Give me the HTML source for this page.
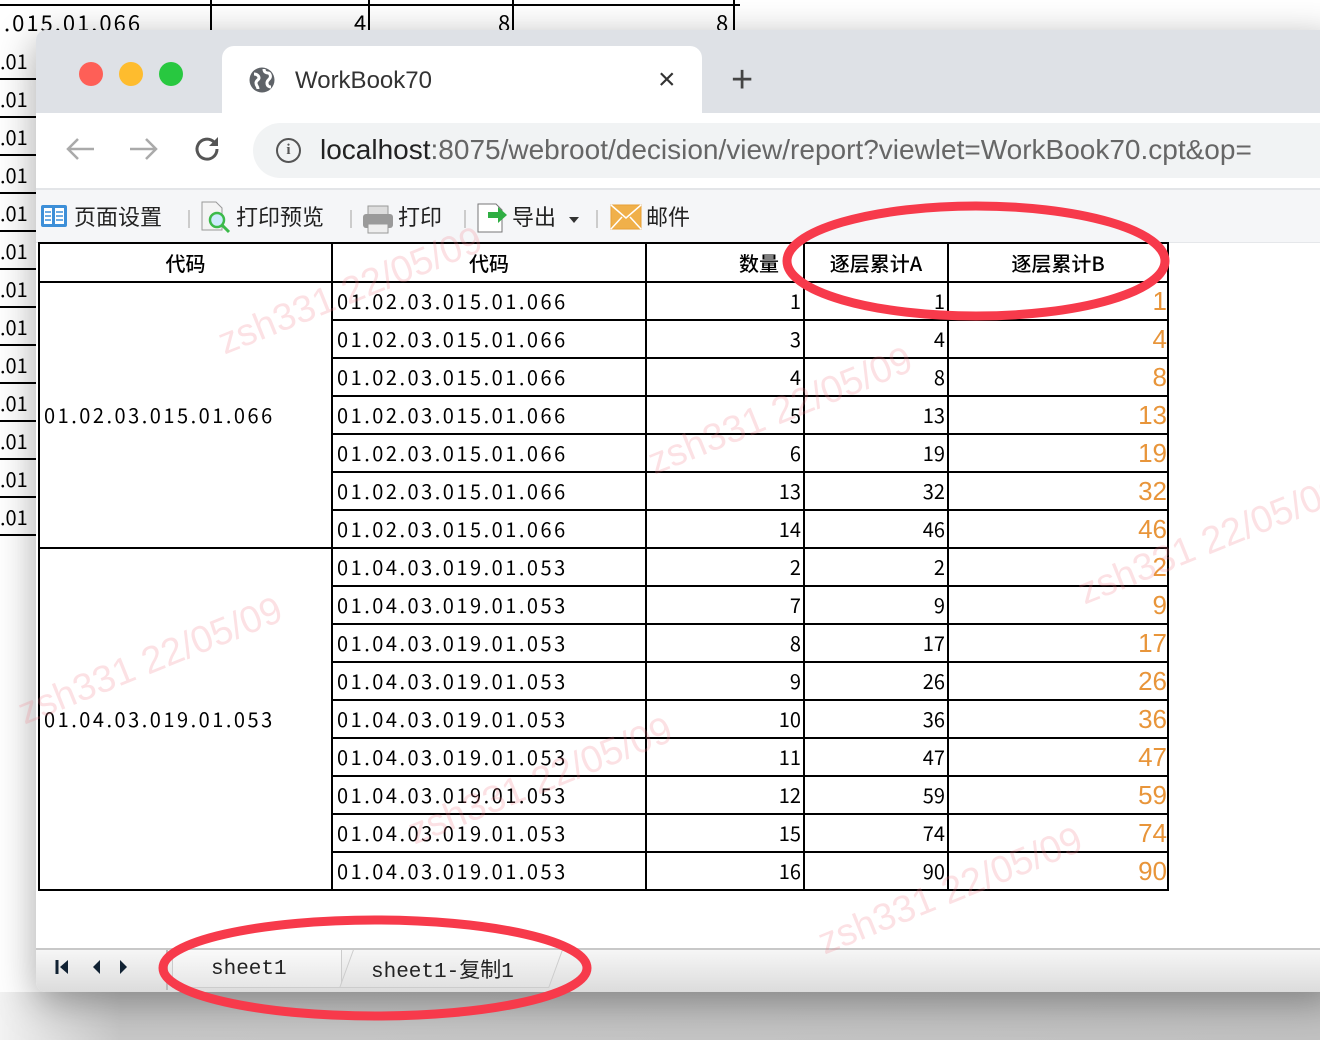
<!DOCTYPE html>
<html><head><meta charset="utf-8"><style>
*{margin:0;padding:0;box-sizing:border-box}
body{width:1320px;height:1040px;overflow:hidden;position:relative;background:#fff;font-family:"Liberation Sans","Noto Sans CJK SC",sans-serif}
.abs{position:absolute}
.bgrow{position:absolute;left:0;width:36px;height:38px;border-bottom:2px solid #000;font:20px "Noto Sans CJK SC",sans-serif;color:#000;overflow:hidden;white-space:nowrap}
.win{position:absolute;left:36px;top:30px;width:1300px;height:962px;background:#fff;border-radius:10px 0 0 10px;box-shadow:0 10px 40px rgba(0,0,0,.35);overflow:hidden}
.tabbar{position:absolute;left:0;top:0;width:100%;height:83px;background:#dee1e6}
.tab{position:absolute;left:186px;top:16px;width:480px;height:67px;background:#fff;border-radius:12px 12px 0 0}
table{position:absolute;left:2px;top:212px;border-collapse:collapse;font:20px "Noto Sans CJK SC",sans-serif;color:#000}
td{border:2px solid #000;height:38px;padding:0 2px;white-space:nowrap;line-height:32px}
td.c{letter-spacing:2.5px;padding-left:4px}
td.n{text-align:right}
td.o{text-align:right;color:#e8953a;font:26px "Liberation Sans",sans-serif;line-height:34px;padding-right:0}
th{border:2px solid #000;height:39px;font-weight:500;font-size:20px;line-height:34px}
.tb{position:absolute;top:158px;left:0;width:100%;height:55px;background:#f5f6f8;border-top:2px solid #e3e5e8;border-bottom:1px solid #e5e7ea;font:22px "Noto Sans CJK SC",sans-serif;color:#222}
.tb span{position:absolute;top:10px}
.sep{position:absolute;top:20px;width:2px;height:18px;background:#ccc}
.wm{position:absolute;color:rgba(240,120,130,.22);font:38px "Liberation Sans",sans-serif;transform:rotate(-22deg);white-space:nowrap}
</style></head><body>
<div class="abs" style="left:0;top:0;width:740px;height:6px;border-bottom:2px solid #000"></div>
<div class="abs" style="left:210px;top:0;width:2px;height:32px;background:#000"></div>
<div class="abs" style="left:368px;top:0;width:2px;height:32px;background:#000"></div>
<div class="abs" style="left:512px;top:0;width:2px;height:32px;background:#000"></div>
<div class="abs" style="left:733px;top:0;width:2px;height:32px;background:#000"></div>
<div class="abs" style="left:4px;top:6px;font:22px 'Noto Sans CJK SC',sans-serif;letter-spacing:2px">.015.01.066</div>
<div class="abs" style="left:354px;top:6px;font:22px 'Noto Sans CJK SC',sans-serif">4</div>
<div class="abs" style="left:498px;top:6px;font:22px 'Noto Sans CJK SC',sans-serif">8</div>
<div class="abs" style="left:716px;top:6px;font:22px 'Noto Sans CJK SC',sans-serif">8</div>
<div class="bgrow" style="top:42px;line-height:38px">.01</div>
<div class="bgrow" style="top:80px;line-height:38px">.01</div>
<div class="bgrow" style="top:118px;line-height:38px">.01</div>
<div class="bgrow" style="top:156px;line-height:38px">.01</div>
<div class="bgrow" style="top:194px;line-height:38px">.01</div>
<div class="bgrow" style="top:232px;line-height:38px">.01</div>
<div class="bgrow" style="top:270px;line-height:38px">.01</div>
<div class="bgrow" style="top:308px;line-height:38px">.01</div>
<div class="bgrow" style="top:346px;line-height:38px">.01</div>
<div class="bgrow" style="top:384px;line-height:38px">.01</div>
<div class="bgrow" style="top:422px;line-height:38px">.01</div>
<div class="bgrow" style="top:460px;line-height:38px">.01</div>
<div class="bgrow" style="top:498px;line-height:38px">.01</div>
<div class="abs" style="left:0;top:992px;width:1320px;height:48px;background:linear-gradient(90deg,#f2f2f2 0,#c8c8c8 120px,#c2c2c2 100%)"></div>

<div class="win">
<div class="tabbar"></div>
<div class="abs" style="left:43px;top:32px;width:24px;height:24px;border-radius:50%;background:#fe5f57"></div>
<div class="abs" style="left:83px;top:32px;width:24px;height:24px;border-radius:50%;background:#febc2e"></div>
<div class="abs" style="left:123px;top:32px;width:24px;height:24px;border-radius:50%;background:#28c840"></div>
<div class="tab"></div>
<svg class="abs" style="left:212px;top:36px" width="28" height="28" viewBox="0 0 28 28"><circle cx="14" cy="14" r="12.5" fill="#5f6368"/><path d="M6 8c3 0 5 2 5 4s-3 2-3 5 2 3 2 6M16 3c0 3 2 4 4 4s3 3 2 5-3 2-3 5 2 4 4 4" stroke="#fff" stroke-width="3" fill="none"/></svg>
<div class="abs" style="left:259px;top:37px;font:24px 'Liberation Sans',sans-serif;color:#333">WorkBook70</div>
<div class="abs" style="left:622px;top:33px;font:30px 'Liberation Sans',sans-serif;color:#333">×</div>
<div class="abs" style="left:695px;top:29px;font:38px 'Liberation Sans',sans-serif;color:#444">+</div>
<div class="abs" style="left:0;top:83px;width:100%;height:75px;background:#fff"></div>
<svg class="abs" style="left:28px;top:106px" width="32" height="26"><path d="M30 13H4M14 3L4 13l10 10" stroke="#aaa" stroke-width="2.5" fill="none"/></svg>
<svg class="abs" style="left:92px;top:106px" width="32" height="26"><path d="M2 13h26M18 3l10 10-10 10" stroke="#aaa" stroke-width="2.5" fill="none"/></svg>
<svg class="abs" style="left:157px;top:104px" width="30" height="30"><path d="M24 15a10 10 0 1 1-3-7" stroke="#555" stroke-width="3" fill="none"/><path d="M25 3v9h-9z" fill="#555"/></svg>
<div class="abs" style="left:217px;top:93px;width:1100px;height:55px;background:#f1f3f4;border-radius:28px"></div>
<div class="abs" style="left:240px;top:108px;width:25px;height:25px;border:2.5px solid #555;border-radius:50%;font:bold 15px 'Liberation Serif',serif;color:#555;text-align:center;line-height:20px">i</div>
<div class="abs" style="left:284px;top:104px;font:28px 'Liberation Sans',sans-serif;color:#666;white-space:nowrap"><span style="color:#222">localhost</span>:8075/webroot/decision/view/report?viewlet=WorkBook70.cpt&amp;op=</div>
<div class="tb">
<svg class="abs" style="left:4px;top:14px" width="28" height="24"><rect x="1" y="1" width="26" height="22" fill="#3d8fd8" rx="2"/><rect x="4" y="4" width="8" height="16" fill="#fff"/><rect x="15" y="4" width="9" height="16" fill="#fff"/><path d="M5 8h6M5 12h6M5 16h6M16 8h7M16 12h7M16 16h7" stroke="#3d8fd8" stroke-width="1.5"/></svg>
<span style="left:38px">页面设置</span><div class="sep" style="left:152px"></div>
<svg class="abs" style="left:164px;top:10px" width="34" height="34"><path d="M2 2h14l6 6v22H2z" fill="#f4f4f4" stroke="#999"/><circle cx="17" cy="20" r="7" fill="#cdeafc" stroke="#3cba4a" stroke-width="2.5"/><path d="M22 25l7 7" stroke="#3cba4a" stroke-width="3"/></svg>
<span style="left:200px">打印预览</span><div class="sep" style="left:314px"></div>
<svg class="abs" style="left:326px;top:14px" width="32" height="30"><rect x="6" y="2" width="20" height="10" fill="#ddd" stroke="#999"/><rect x="1" y="10" width="30" height="14" rx="3" fill="#9a9a9a"/><rect x="6" y="20" width="20" height="9" fill="#eee" stroke="#999"/></svg>
<span style="left:362px">打印</span><div class="sep" style="left:428px"></div>
<svg class="abs" style="left:440px;top:10px" width="34" height="34"><path d="M2 4h18l6 6v22H2z" fill="#fff" stroke="#777"/><path d="M12 12h10v-5l9 8-9 8v-5H12z" fill="#2fae43"/></svg>
<span style="left:476px">导出</span><div class="abs" style="left:533px;top:27px;border:5px solid transparent;border-top:6px solid #333"></div><div class="sep" style="left:560px"></div>
<svg class="abs" style="left:574px;top:14px" width="32" height="26"><rect x="1" y="1" width="30" height="24" fill="#f0b04a" stroke="#e8a036"/><path d="M1 1l15 13L31 1M1 25l11-12M31 25L20 13" stroke="#fff" stroke-width="1.5" fill="none"/></svg>
<span style="left:610px">邮件</span>
</div>

<table>
<colgroup><col style="width:293px"><col style="width:314px"><col style="width:158px"><col style="width:144px"><col style="width:220px"></colgroup>
<tr><th>代码</th><th>代码</th><th style="text-align:right;padding-right:24px">数量</th><th>逐层累计A</th><th>逐层累计B</th></tr>
<tr><td class="c" rowspan="7">01.02.03.015.01.066</td><td class="c">01.02.03.015.01.066</td><td class="n">1</td><td class="n">1</td><td class="o">1</td></tr>
<tr><td class="c">01.02.03.015.01.066</td><td class="n">3</td><td class="n">4</td><td class="o">4</td></tr>
<tr><td class="c">01.02.03.015.01.066</td><td class="n">4</td><td class="n">8</td><td class="o">8</td></tr>
<tr><td class="c">01.02.03.015.01.066</td><td class="n">5</td><td class="n">13</td><td class="o">13</td></tr>
<tr><td class="c">01.02.03.015.01.066</td><td class="n">6</td><td class="n">19</td><td class="o">19</td></tr>
<tr><td class="c">01.02.03.015.01.066</td><td class="n">13</td><td class="n">32</td><td class="o">32</td></tr>
<tr><td class="c">01.02.03.015.01.066</td><td class="n">14</td><td class="n">46</td><td class="o">46</td></tr>
<tr><td class="c" rowspan="9">01.04.03.019.01.053</td><td class="c">01.04.03.019.01.053</td><td class="n">2</td><td class="n">2</td><td class="o">2</td></tr>
<tr><td class="c">01.04.03.019.01.053</td><td class="n">7</td><td class="n">9</td><td class="o">9</td></tr>
<tr><td class="c">01.04.03.019.01.053</td><td class="n">8</td><td class="n">17</td><td class="o">17</td></tr>
<tr><td class="c">01.04.03.019.01.053</td><td class="n">9</td><td class="n">26</td><td class="o">26</td></tr>
<tr><td class="c">01.04.03.019.01.053</td><td class="n">10</td><td class="n">36</td><td class="o">36</td></tr>
<tr><td class="c">01.04.03.019.01.053</td><td class="n">11</td><td class="n">47</td><td class="o">47</td></tr>
<tr><td class="c">01.04.03.019.01.053</td><td class="n">12</td><td class="n">59</td><td class="o">59</td></tr>
<tr><td class="c">01.04.03.019.01.053</td><td class="n">15</td><td class="n">74</td><td class="o">74</td></tr>
<tr><td class="c">01.04.03.019.01.053</td><td class="n">16</td><td class="n">90</td><td class="o">90</td></tr>
</table>

<div class="abs" style="left:0;top:918px;width:100%;height:44px;background:linear-gradient(#f6f6f6,#dcdcdc);border-top:2px solid #c8c8c8"></div>
<svg class="abs" style="left:18px;top:928px" width="80" height="18"><path d="M3 2v14" stroke="#123" stroke-width="3"/><path d="M14 2L6 9l8 7z" fill="#123"/><path d="M46 2l-7 7 7 7z" fill="#123"/><path d="M66 2l7 7-7 7z" fill="#123"/></svg>
<div class="abs" style="left:130px;top:920px;width:2px;height:40px;background:#bbb"></div>
<div class="abs" style="left:136px;top:920px;width:170px;height:38px;background:linear-gradient(#fafafa,#e6e6e6);border:1px solid #ccc;border-top:none;font:21px 'Liberation Mono',monospace;color:#222;padding:8px 0 0 38px">sheet1</div>
<div class="abs" style="left:310px;top:920px;width:210px;height:38px;background:linear-gradient(#f6f6f6,#e2e2e2);border:1px solid #ccc;border-top:none;font:21px 'Liberation Mono','Noto Sans CJK SC',monospace;color:#222;padding:4px 0 0 24px;transform:skewX(-20deg)"><div style="transform:skewX(20deg)">sheet1-复制1</div></div>
</div>

<div class="wm" style="left:210px;top:270px">zsh331 22/05/09</div>
<div class="wm" style="left:640px;top:390px">zsh331 22/05/09</div>
<div class="wm" style="left:10px;top:640px">zsh331 22/05/09</div>
<div class="wm" style="left:400px;top:760px">zsh331 22/05/09</div>
<div class="wm" style="left:1070px;top:520px">zsh331 22/05/09</div>
<div class="wm" style="left:810px;top:870px">zsh331 22/05/09</div>

<svg class="abs" style="left:0;top:0" width="1320" height="1040"><ellipse cx="976" cy="261" rx="189" ry="55" fill="none" stroke="#f73a4b" stroke-width="9"/><ellipse cx="375" cy="968" rx="212" ry="48" fill="none" stroke="#f73a4b" stroke-width="9"/></svg>
</body></html>
